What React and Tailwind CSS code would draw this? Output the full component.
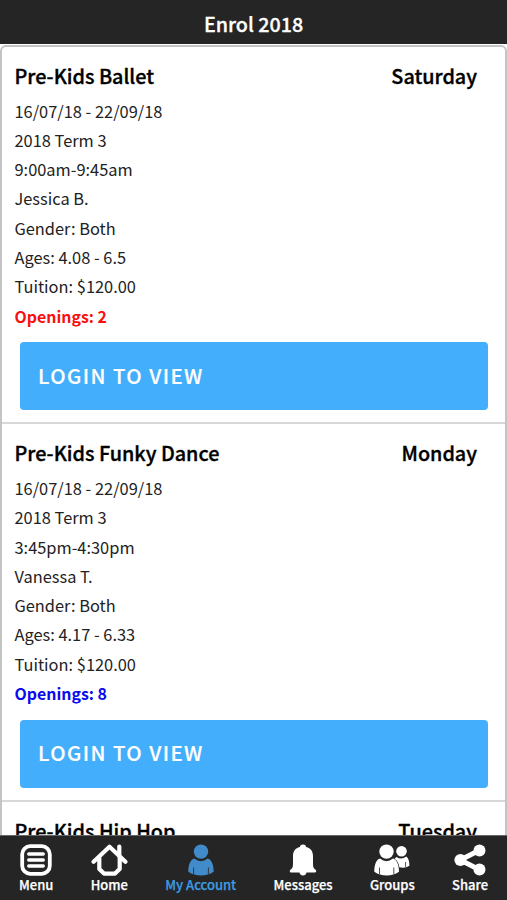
import React, { useState } from 'react';

const classes = [
  {
    id: 1, name: 'Pre-Kids Ballet', day: 'Saturday', dates: '16/07/18 - 22/09/18', term: '2018 Term 3',
    time: '9:00am-9:45am', teacher: 'Jessica B.', gender: 'Both', ages: '4.08 - 6.5', tuition: '$120.00', openings: 2,
  },
  {
    id: 2, name: 'Pre-Kids Funky Dance', day: 'Monday', dates: '16/07/18 - 22/09/18', term: '2018 Term 3',
    time: '3:45pm-4:30pm', teacher: 'Vanessa T.', gender: 'Both', ages: '4.17 - 6.33', tuition: '$120.00', openings: 8,
  },
];

// Class that is only partly visible above the tabs
const nextClass = { name: 'Pre-Kids Hip Hop', day: 'Tuesday' };

const MenuIcon = () => (
  <svg width="32" height="32" viewBox="0 0 32 32" fill="none" stroke="white" strokeLinecap="round">
    <rect x="2.2" y="2.2" width="27.6" height="27.6" rx="8" strokeWidth="3.8" />
    <path d="M8.700 10H23.300M8.700 16H23.300M8.700 22H23.300" strokeWidth="3.3" />
  </svg>
);

const HomeIcon = () => (
  <svg width="37" height="32" viewBox="0 0 37 32" fill="none" stroke="white" strokeWidth="4.2" strokeLinecap="round" strokeLinejoin="round">
    <path d="M2.600 17.800L18.500 2.800L34.400 17.800" />
    <path d="M28.300 2.500V12" />
    <path d="M8.300 14V25L13 29.600H24L28.700 25V14" />
  </svg>
);

const AccountIcon = () => (
  <svg width="26" height="32" viewBox="0 0 26 32" fill="#428bca">
    <circle cx="13" cy="7.600" r="7.200" />
    <path d="M6.300 14.600Q13 19.700 19.700 14.600C23 15.500 25.700 20 25.700 27.800Q20 31.600 13 31.600T.3 27.800C.3 20 3 15.500 6.300 14.600Z" />
    <path d="M5.600 23.500V30M20.400 23.500V30" stroke="#252525" strokeWidth=".8" />
  </svg>
);

const BellIcon = () => (
  <svg width="28" height="32" viewBox="0 0 28 32" fill="white">
    <circle cx="14" cy="3.500" r="3.100" />
    <path d="M14 2.500C20 2.500 24 6 24 12V19.500C24 23 24.500 24.200 26 25.200C28 26.800 27.300 28.400 25.600 28.400H2.400C.7 28.400 0 26.800 2 25.200C3.500 24.200 4 23 4 19.500V12C4 6 8 2.500 14 2.500Z" />
    <path d="M10.300 27.500H17.700Q17.200 31.500 14 31.500T10.300 27.500Z" />
  </svg>
);

const GroupsIcon = () => (
  <svg width="36" height="32" viewBox="0 0 36 32" fill="white">
    <circle cx="27.500" cy="7.200" r="5.300" />
    <path d="M22.500 13Q27.500 16.300 32.300 12.500C34.500 14 35.500 18 35.400 21.800Q31 24.700 25.300 23.300C24.800 19.500 23.500 16.700 20.500 14.800Z" />
    <path d="M31.600 18V23" stroke="#252525" strokeWidth=".8" />
    <circle cx="12.500" cy="7.600" r="7.200" />
    <path d="M6 14.600Q12.500 19.700 19 14.600C22.300 15.500 25 20 25 27.800Q19.500 31.600 12.600 31.600T.3 27.800C.3 20 2.700 15.500 6 14.600Z" />
    <path d="M5.500 23.500V30M19.800 23.500V30" stroke="#252525" strokeWidth=".8" />
  </svg>
);

const ShareIcon = () => (
  <svg width="32" height="32" viewBox="0 0 32 32" fill="white">
    <path d="M25.500 6.300L6.300 16L25.500 25.700" fill="none" stroke="white" strokeWidth="5" />
    <circle cx="6.400" cy="16" r="6" />
    <circle cx="25.500" cy="6.400" r="6" />
    <circle cx="25.500" cy="25.600" r="6" />
  </svg>
);

const tabs = [
  { name: 'Menu', icon: MenuIcon },
  { name: 'Home', icon: HomeIcon },
  { name: 'My Account', icon: AccountIcon },
  { name: 'Messages', icon: BellIcon },
  { name: 'Groups', icon: GroupsIcon },
  { name: 'Share', icon: ShareIcon },
];

const ClassTitle = ({ name, day }) => (
  <div className="flex h-[50px] items-center justify-between pl-[0.5px] pr-3 pt-2 text-[19.8px] font-medium text-black [-webkit-text-stroke:0.35px]">
    <h2>{name}</h2>
    <span>{day}</span>
  </div>
);

const ClassCard = ({ item }) => (
  <li className="h-[377.5px] shrink-0 border-b-2 border-[#d8d8d8] pl-3 pr-4">
    <ClassTitle name={item.name} day={item.day} />
    <div className="pl-[0.5px] text-[16.4px] leading-[29.3px] text-[#222]">
      <p>{item.dates}</p>
      <p>{item.term}</p>
      <p>{item.time}</p>
      <p>{item.teacher}</p>
      <p>Gender: {item.gender}</p>
      <p>Ages: {item.ages}</p>
      <p>Tuition: {item.tuition}</p>
      <p className={item.openings < 5 ? 'text-[15.9px] font-bold text-[#fa0f0f]' : 'text-[15.9px] font-bold text-[#0a0aee]'}>
        Openings: {item.openings}
      </p>
    </div>
    <button className="ml-1.5 mt-[11.3px] flex h-[68px] w-[468px] items-center rounded bg-[#42aefc] pb-0.5 pl-[18px] text-[20.4px] font-medium tracking-[1.45px] text-white [-webkit-text-stroke:0.2px]">
      LOGIN TO VIEW
    </button>
  </li>
);

export default function App() {
  const [active, setActive] = useState('My Account');

  return (
    <div className="flex h-screen flex-col overflow-hidden bg-white font-['Noto_Sans_CJK_SC',sans-serif]">
      <header className="flex h-[43.5px] shrink-0 items-center justify-center bg-[#252525] pt-[5px] text-[19.7px] font-medium text-white [-webkit-text-stroke:0.3px]">
        <h1>Enrol 2018</h1>
      </header>

      {/* Class list */}
      <main className="min-h-0 flex-1 overflow-hidden pt-px">
        <ul className="flex flex-col rounded-t-md border-2 border-[#c4c4c4]">
          {classes.map(item => (
            <ClassCard key={item.id} item={item} />
          ))}
          <li className="pl-3 pr-4">
            <ClassTitle name={nextClass.name} day={nextClass.day} />
          </li>
        </ul>
      </main>

      {/* Bottom tabs */}
      <nav className="flex h-[65px] shrink-0 justify-between border-t border-[#666] bg-[#252525] pl-[19px] pr-[19px] pt-2">
        {tabs.map(({ name, icon: Icon }) => (
          <button
            key={name}
            onClick={() => setActive(name)}
            className={`flex flex-col items-center text-[13px] font-medium [-webkit-text-stroke:0.25px] ${active === name ? 'text-[#3d9be0]' : 'text-white'}`}
          >
            <Icon />
            <span className="leading-[18px]">{name}</span>
          </button>
        ))}
      </nav>
    </div>
  );
}
